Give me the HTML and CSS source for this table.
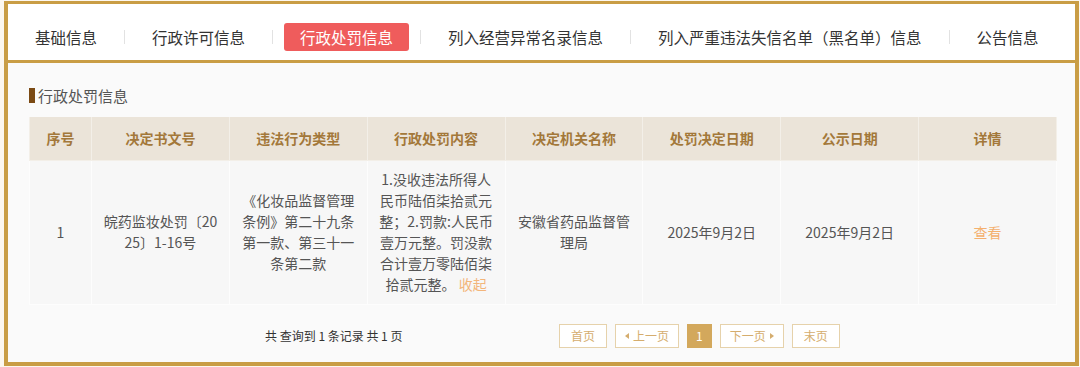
FILE: index.html
```html
<!DOCTYPE html>
<html lang="zh-CN">
<head>
<meta charset="utf-8">
<title>行政处罚信息</title>
<link rel="stylesheet" href="styles.css">
</head>
<body>
<div class="panel">
  <nav class="tabs">
    <span class="tab">基础信息</span><span class="sep"></span>
    <span class="tab">行政许可信息</span><span class="sep"></span>
    <span class="tab active">行政处罚信息</span><span class="sep"></span>
    <span class="tab">列入经营异常名录信息</span><span class="sep"></span>
    <span class="tab">列入严重违法失信名单（黑名单）信息</span><span class="sep"></span>
    <span class="tab">公告信息</span>
  </nav>
  <section class="content">
    <h2 class="title">行政处罚信息</h2>
    <table class="grid">
      <colgroup>
        <col class="c-no"><col><col><col><col><col><col><col>
      </colgroup>
      <thead>
        <tr>
          <th>序号</th><th>决定书文号</th><th>违法行为类型</th><th>行政处罚内容</th>
          <th>决定机关名称</th><th>处罚决定日期</th><th>公示日期</th><th>详情</th>
        </tr>
      </thead>
      <tbody>
        <tr>
          <td>1</td>
          <td>皖药监妆处罚〔20<br>25〕1-16号</td>
          <td>《化妆品监督管理<br>条例》第二十九条<br>第一款、第三十一<br>条第二款</td>
          <td>1.没收违法所得人<br>民币陆佰柒拾贰元<br>整；2.罚款:人民币<br>壹万元整。罚没款<br>合计壹万零陆佰柒<br>拾贰元整。 <span class="fold">收起</span></td>
          <td>安徽省药品监督管<br>理局</td>
          <td>2025年9月2日</td>
          <td>2025年9月2日</td>
          <td><span class="view">查看</span></td>
        </tr>
      </tbody>
    </table>
    <div class="pager">
      <span class="count">共 查询到 1 条记录 共 1 页</span>
      <span class="pg">首页</span>
      <span class="pg pg-step"><i class="arrow-l"></i>上一页</span>
      <span class="pg pg-cur">1</span>
      <span class="pg pg-step">下一页<i class="arrow-r"></i></span>
      <span class="pg">末页</span>
    </div>
  </section>
</div>
</body>
</html>
```
FILE: styles.css
```css
* { box-sizing: border-box; }
body {
  margin: 0;
  background: #fcf7ef;
  font-family: "Noto Sans CJK SC", "Noto Sans", sans-serif;
}
.panel {
  margin: 1px 1px 2px 4px;
  border: 4px solid #c99d45;
  border-top-width: 3px;
  background: #fafafa;
}
.tabs {
  display: flex;
  align-items: center;
  background: #fff;
  padding: 19px 0 9px 11px;
  border-bottom: 3px solid #c99d45;
}
.tab {
  height: 28px;
  line-height: 28px;
  padding: 0 16px;
  font-size: 15.5px;
  color: #333;
  border-radius: 3px;
  white-space: nowrap;
}
.tab.active {
  background: #ef5c5c;
  color: #fff;
}
.sep {
  width: 1px;
  height: 14px;
  background: #e2e2e2;
  margin: 0 11px 0 11px;
}
.content {
  padding: 20px 18px 14px 21px;
}
.title {
  display: flex;
  align-items: center;
  height: 24px;
  margin: 0 0 10px;
  font-size: 15px;
  font-weight: normal;
  color: #555;
}
.title::before {
  content: "";
  width: 6px;
  height: 15px;
  background: #7b4a14;
  margin-right: 3px;
}
.grid {
  width: 100%;
  border-collapse: collapse;
  table-layout: fixed;
}
.c-no { width: 62px; }
.grid th {
  height: 43px;
  background: #ebe4d9;
  color: #a3783a;
  font-size: 14px;
  font-weight: bold;
  border: 1px solid #f3efe8;
  border-top: 0;
}
.grid td {
  height: 144px;
  background: #f7f7f7;
  color: #555;
  font-size: 14px;
  line-height: 21px;
  text-align: center;
  vertical-align: middle;
  padding: 0 6px;
  border: 1px solid #fdfdfd;
  white-space: nowrap;
}
.fold { color: #f3b57a; }
.view { color: #f4b06e; }
.pager {
  display: flex;
  align-items: center;
  height: 24px;
  margin-top: 19px;
  padding-left: 236px;
}
.count {
  width: 294px;
  font-size: 12px;
  color: #333;
}
.pg {
  display: flex;
  align-items: center;
  height: 24px;
  padding: 0 11px;
  margin-right: 8px;
  border: 1px solid #e6d2ab;
  background: #fff;
  color: #d5ad6e;
  font-size: 12px;
}
.pg-step { padding: 0 9px; }
.pg-cur {
  padding: 0 8px;
  background: #d3a85c;
  border-color: #d3a85c;
  color: #fff;
}
.arrow-l, .arrow-r {
  display: inline-block;
  width: 0;
  height: 0;
  border-top: 3px solid transparent;
  border-bottom: 3px solid transparent;
}
.arrow-l { border-right: 4px solid #d5ad6e; margin-right: 4px; }
.arrow-r { border-left: 4px solid #d5ad6e; margin-left: 4px; }
```
